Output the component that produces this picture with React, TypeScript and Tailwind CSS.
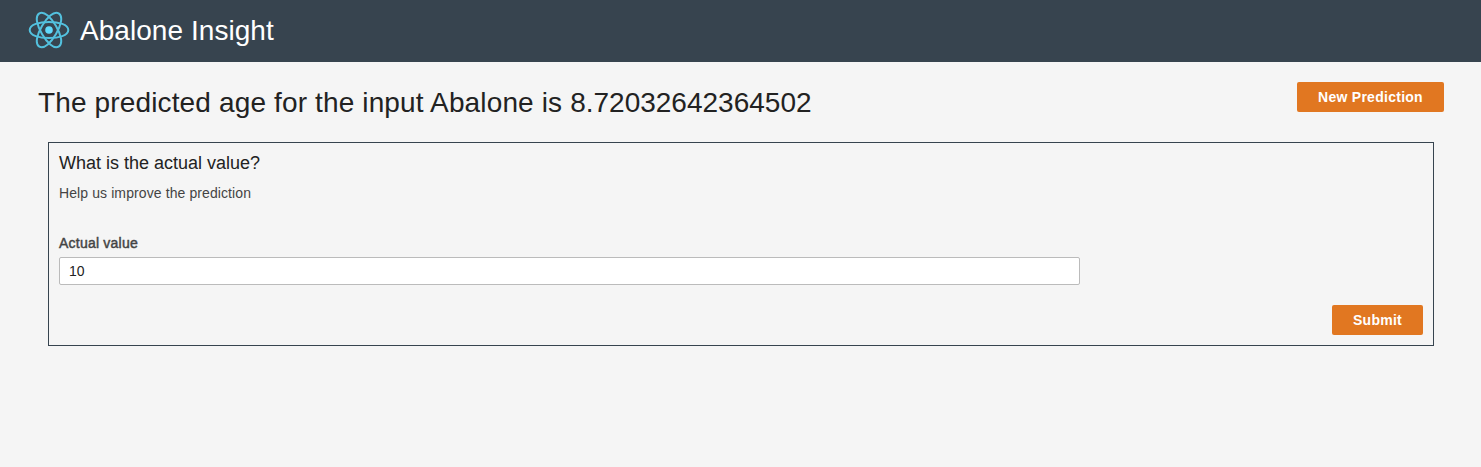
import React from "react";

const orbit = "M-19.3 0C-19.3-5.6-9.6-8.1 0-8.1S19.3-5.6 19.3 0 9.6 8.1 0 8.1-19.3 5.6-19.3 0Z";

function AtomLogo() {
  return (
    <svg className="h-[38px] w-[42px] shrink-0" viewBox="-21 -19 42 38" fill="none" stroke="#53c1de" strokeWidth="2">
      <circle r="3.8" fill="#61dafb" stroke="none" />
      <path d={orbit} />
      <path d={orbit} transform="rotate(60)" />
      <path d={orbit} transform="rotate(120)" />
    </svg>
  );
}

function Button({ children, className }: { children: React.ReactNode; className: string }) {
  return (
    <button className={`h-[30px] rounded-[2px] bg-[#e17721] text-sm font-bold tracking-[0.27px] text-white ${className}`}>
      {children}
    </button>
  );
}

export default function App() {
  return (
    <div className="min-h-screen bg-[#f5f5f5] font-['Liberation_Sans',Arial,sans-serif] text-[#222]">
      <header className="flex h-[62px] items-center gap-[10px] bg-[#37444f] pb-0.5 pl-7 text-white">
        <AtomLogo />
        <span className="mt-0.5 text-[28px] leading-9 tracking-[0.05px] whitespace-nowrap">Abalone Insight</span>
      </header>
      <main className="pt-5 pr-[37px] pl-[38px]">
        <div className="flex h-[60px] items-start justify-between">
          <h1 className="mt-[3px] text-[28px] leading-9 whitespace-nowrap">
            <span className="tracking-[0.14px]">The predicted age for the input Abalone is </span>
            8.72032642364502
          </h1>
          <Button className="w-[147px]">New Prediction</Button>
        </div>
        <section className="mr-[10px] ml-[10px] flex h-[204px] flex-col border border-[#37444f] px-[10px]">
          <h2 className="mt-[9px] text-lg leading-[22px]">What is the actual value?</h2>
          <p className="mt-[9px] text-sm leading-5 tracking-[0.1px] text-[#444]">Help us improve the prediction</p>
          <label
            className="mt-[30px] text-sm leading-5 tracking-[0.22px] text-[#444] [-webkit-text-stroke:0.45px_#444]"
            htmlFor="actual"
          >
            Actual value
          </label>
          <input
            id="actual"
            defaultValue="10"
            className="mt-1 h-7 w-[1021px] shrink-0 rounded-[2px] border border-[#bbb] bg-white px-[9px] text-sm outline-none"
          />
          <Button className="mt-5 w-[91px] shrink-0 self-end">Submit</Button>
        </section>
      </main>
    </div>
  );
}
